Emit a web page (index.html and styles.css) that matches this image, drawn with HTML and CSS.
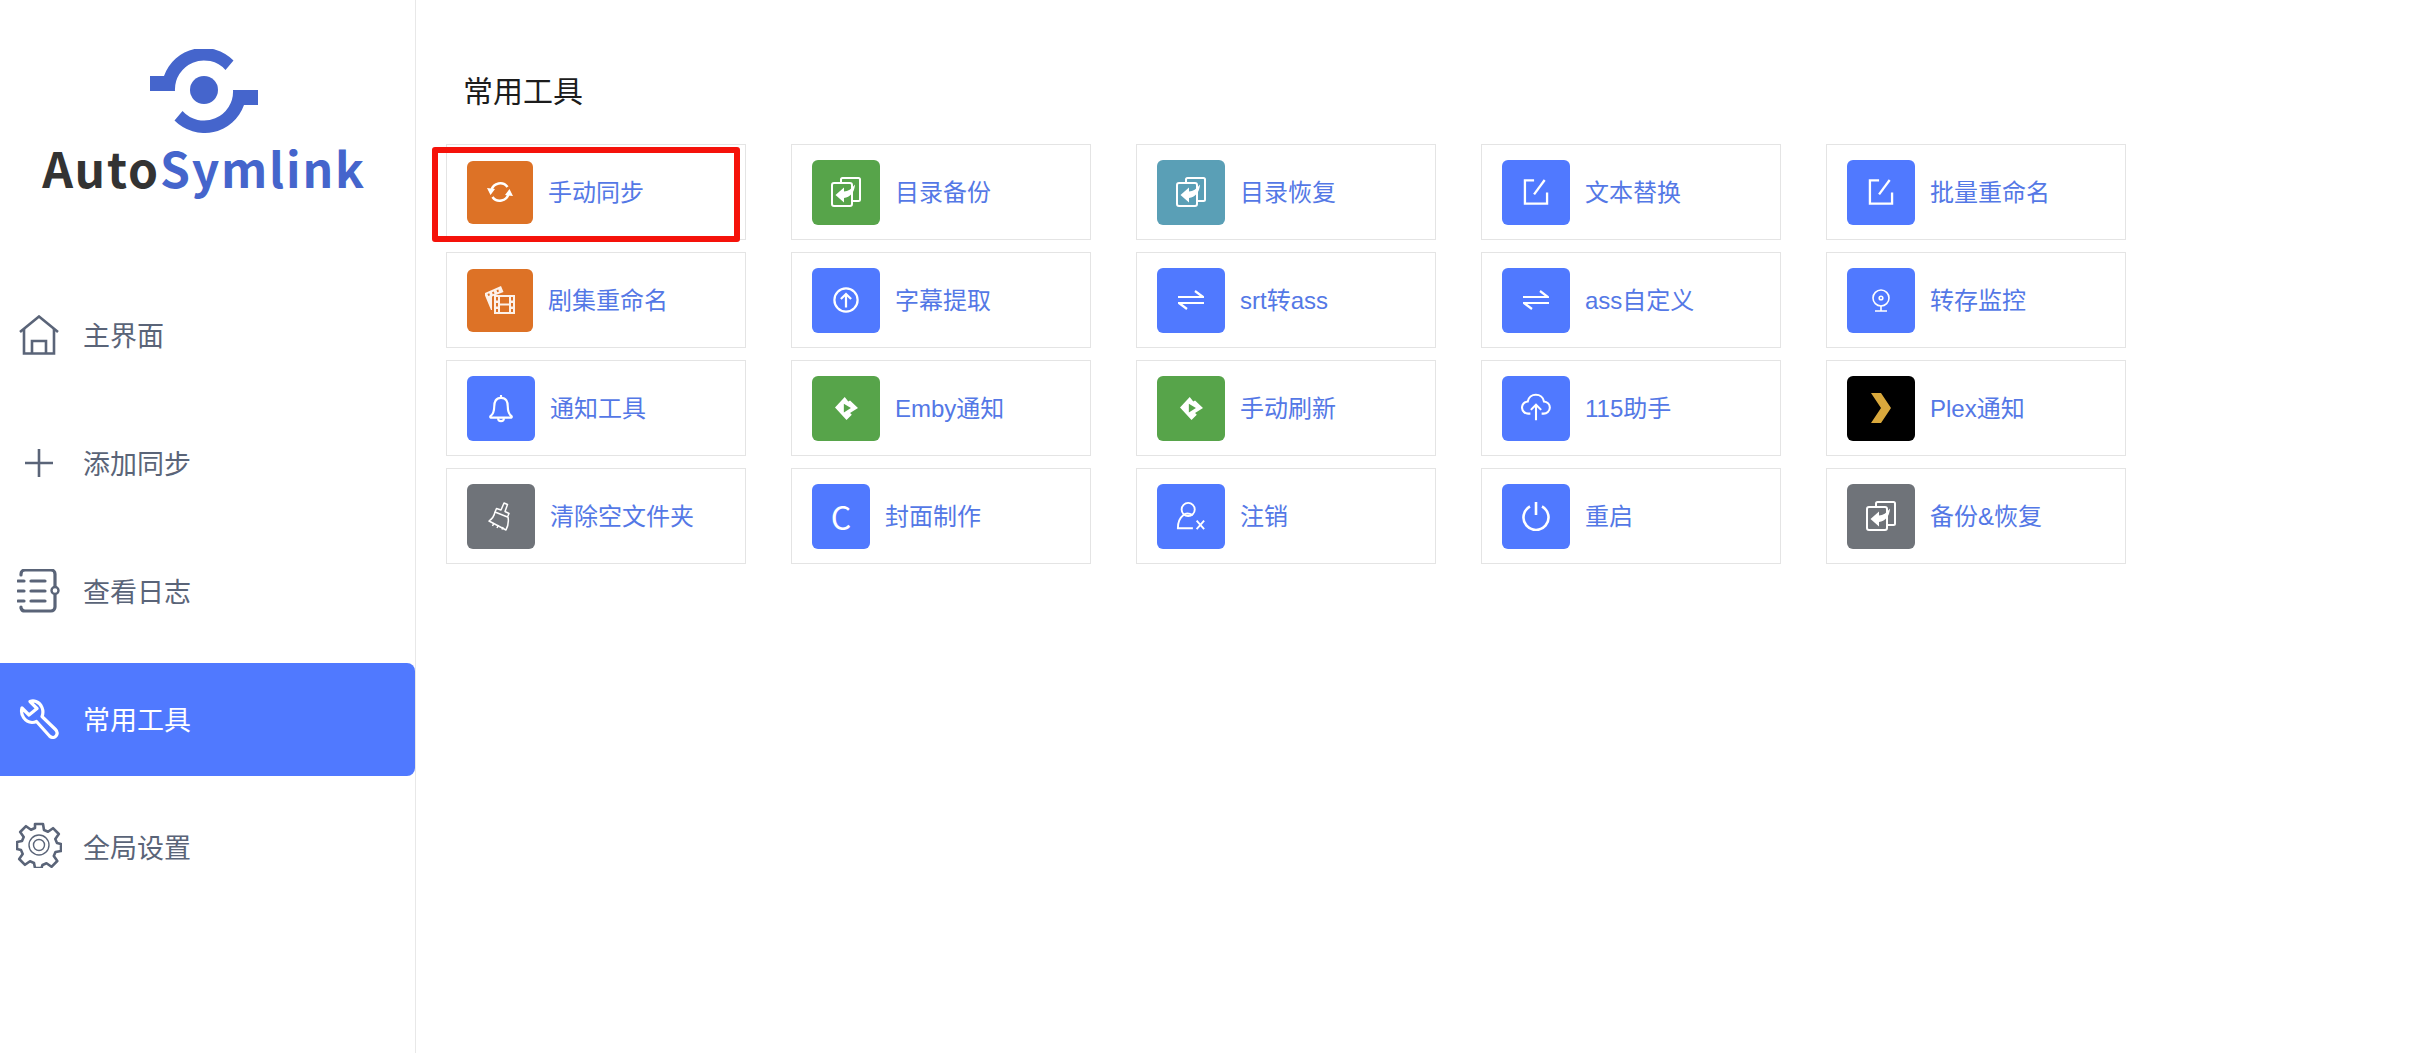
FILE: index.html
```html
<!DOCTYPE html>
<html lang="zh-CN">
<head>
<meta charset="utf-8">
<title>AutoSymlink</title>
<link rel="stylesheet" href="styles.css">
</head>
<body>
<svg class="sprite" xmlns="http://www.w3.org/2000/svg">
  <symbol id="i-sync" viewBox="0 0 26 26"><g fill="none" stroke="#fff" stroke-width="2.600"><path d="M4.500 11A9 9 0 0 1 20.500 8"/><path d="M21.500 15A9 9 0 0 1 5.500 18"/></g><path fill="#fff" d="M0 9 8 10 3.500 16zM26 17 18 16 22.500 10z"/></symbol>
  <symbol id="i-copy" viewBox="0 0 30 30"><g fill="none" stroke="#fff" stroke-width="2"><path d="M10 5V2.500A1.500 1.500 0 0 1 11.500 1h16A1.500 1.500 0 0 1 29 2.500v20a1.500 1.500 0 0 1-1.500 1.500H22"/><rect x="1" y="6" width="20" height="23" rx="2"/></g><path fill="#fff" d="M4.500 18 13 10.500V14.500C17 14.500 20.500 12 24 7.500 23.500 15.500 19 20.500 13 21V25.500Z"/></symbol>
  <symbol id="i-film" viewBox="0 0 30 28"><path fill="#fff" fill-opacity=".9" d="M0 7 16 0l2.500 6L7 10.500V24h-1L0 9.500zM2.500 8l.8 2 1.700-.7-.8-2zM7 6.200l.8 2 1.700-.7-.8-2zM11.500 4.300l.8 2 1.700-.7-.8-2z"/><path fill="#fff" fill-opacity=".9" fill-rule="evenodd" d="M9 9h21v19H9zM11 11v3.500h2V11zM11 17v3.500h2V17zM11 23v3h2v-3zM26 11v3.500h2V11zM26 17v3.500h2V17zM26 23v3h2v-3zM15 11v6.500h9V11zM15 19.500V26h9v-6.500z"/></symbol>
  <symbol id="i-up" viewBox="0 0 28 28"><g fill="none" stroke="#fff" stroke-width="2.400"><circle cx="14" cy="14" r="12.500"/><path d="M14 22V7.500M8.500 13 14 7.500l5.500 5.500"/></g></symbol>
  <symbol id="i-edit" viewBox="0 0 26 27"><g fill="none" stroke="#fff" stroke-width="2.400"><path d="M11 1.500H1.500v24h23V14"/><path d="M11 16 22 1"/></g></symbol>
  <symbol id="i-swap" viewBox="0 0 26 20"><g fill="none" stroke="#fff" stroke-width="2.200"><path d="M0 7h25L17 1"/><path d="M26 13H1l8 6"/></g></symbol>
  <symbol id="i-cam" viewBox="0 0 20 23"><g fill="none" stroke="#fff" stroke-width="1.600"><circle cx="10" cy="9" r="8"/><circle cx="10" cy="9" r="1.800"/><path d="M10 17v5M4 22h12"/></g></symbol>
  <symbol id="i-bell" viewBox="0 0 26 30"><g fill="none" stroke="#fff" stroke-width="2.200"><path d="M13 4C7.500 4 6 8 6 13c0 5-1 8-4 10a1 1 0 0 0 .5 1.500h21a1 1 0 0 0 .5-1.500c-3-2-4-5-4-10 0-5-1.500-9-7-9z"/><path d="M13 1v3M10 25a3 3 0 0 0 6 0"/></g></symbol>
  <symbol id="i-emby" viewBox="0 0 26 26"><path fill="#fff" fill-rule="evenodd" d="M11 0 0 12 13 26l6-6-2-2 9-5.500L17 4l-2 1zM10 7.500v10l8-5z"/></symbol>
  <symbol id="i-cloud" viewBox="0 0 32 26"><g fill="none" stroke="#fff" stroke-width="2.200"><path d="M10 19H8a6.500 6.500 0 0 1-.8-13A8.800 8.800 0 0 1 24.500 6 6.500 6.500 0 0 1 24 19h-2"/><path d="M16 26V10M10.500 15 16 9.500l5.500 5.500"/></g></symbol>
  <symbol id="i-plex" viewBox="0 0 20 30"><path fill="#d9a83c" d="M0 0h10l10 15-10 15H0l10-15z"/></symbol>
  <symbol id="i-broom" viewBox="0 0 26 29"><g fill="none" stroke="#fff" stroke-width="1.500" stroke-linejoin="round"><path d="M16 1l3.500 1.500-2.500 7 4 2-1.500 3.500L7 10l1.500-3.500 4.500 1.500z"/><path d="M7 10c-1 5-3 7-6 9l17 9c2-4 3-8 2-13"/><path d="M6 21l-1.500 3M10.500 23l-1.500 3M15 25l-1 2.500"/></g></symbol>
  <symbol id="i-user" viewBox="0 0 32 30"><g fill="none" stroke="#fff" stroke-width="2"><circle cx="13" cy="8" r="7"/><path d="M18 14c-4-2-8-2-10 0-4 3-6 8-6 14h16"/><path d="M22 20l8 9M30 20l-8 9"/></g></symbol>
  <symbol id="i-power" viewBox="0 0 30 28"><g fill="none" stroke="#fff" stroke-width="2.600"><path d="M9 4.500a12.500 12.500 0 1 0 12 0"/><path d="M15 0v13"/></g></symbol>
  <symbol id="n-home" viewBox="0 0 40 40"><g fill="none" stroke="#5a6478" stroke-width="2.600"><path d="M1 17 20 1.500 39 17"/><path d="M5 14v24.500h30V14"/><path d="M13 38.500V26h14v12.500"/></g></symbol>
  <symbol id="n-plus" viewBox="0 0 28 28"><path stroke="#5a6478" stroke-width="2.600" d="M14 0v28M0 14h28"/></symbol>
  <symbol id="n-log" viewBox="0 0 44 44"><g fill="none" stroke="#5a6478" stroke-width="3.200" stroke-linecap="round"><path d="M4 6V5a4 4 0 0 1 4-4h26a4 4 0 0 1 4 4v12M4 38v1a4 4 0 0 0 4 3h26a4 4 0 0 0 4-4V26"/><path d="M1 12h6M1 22h6M1 32h6"/><path d="M14 12h14M14 22h14M14 32h14"/><circle cx="38" cy="21.500" r="3.500" stroke-width="2.400"/></g></symbol>
  <symbol id="n-wrench" viewBox="0 0 40 40"><path fill="none" stroke="#fff" stroke-width="3.200" stroke-linejoin="round" d="M11 2.500 18 9.500 10 16 3 9c-2 7 3 14 10 14.500 2 0 3-.3 4.500-1L30.500 37c2 2 5 2 6.500 0s1.500-4.500-.5-6.500L23 17.500c2.500-6-.5-13-6-15-2-.7-4-.7-6 0z"/></symbol>
  <symbol id="n-gear" viewBox="0 0 46 46"><g fill="none" stroke="#5a6478"><path stroke-width="2.600" stroke-linejoin="round" d="M19 2h8l1 6 4 1.700 5-3.500 5.800 5.800-3.500 5L41 21l4 1v7l-5.500 1-1.700 4 3.500 5-5.800 5.800-5-3.500-4 1.700-1 3H19l-1-5-4-1.700-5 3.500-5.800-5.800 3.500-5L5 28l-4-1v-7l5-1 1.700-4-3.500-5L10 4.200l5 3.500L19 6z"/><circle cx="23" cy="23" r="10" stroke-width="1.400"/><circle cx="23" cy="23" r="5.500" stroke-width="1.400"/></g></symbol>
</svg>
<div class="app">
  <aside class="sidebar">
    <div class="brand">
      <svg class="brand-mark" viewBox="150 49 108 84" xmlns="http://www.w3.org/2000/svg"><g fill="#4565cc"><path d="M233.500 60.500A42 42 0 0 0 164 76H150V91H175A29 29 0 0 1 225.500 70Z"/><path d="M174.500 120.500A42 42 0 0 0 244 105H258V90H233A29 29 0 0 1 182.500 111Z"/><circle cx="204" cy="90" r="14"/></g></svg>
      <div class="brand-name">Auto<span class="brand-accent">Symlink</span></div>
    </div>
    <nav class="nav">
      <a class="nav-item"><span class="nav-icon"><svg class="ni-home"><use href="#n-home"/></svg></span><span class="nav-text">主界面</span></a>
      <a class="nav-item"><span class="nav-icon"><svg class="ni-plus"><use href="#n-plus"/></svg></span><span class="nav-text">添加同步</span></a>
      <a class="nav-item"><span class="nav-icon"><svg class="ni-log"><use href="#n-log"/></svg></span><span class="nav-text">查看日志</span></a>
      <a class="nav-item active"><span class="nav-icon"><svg class="ni-home"><use href="#n-wrench"/></svg></span><span class="nav-text">常用工具</span></a>
      <a class="nav-item"><span class="nav-icon"><svg class="ni-gear"><use href="#n-gear"/></svg></span><span class="nav-text">全局设置</span></a>
    </nav>
  </aside>
  <main class="main">
    <h1 class="title">常用工具</h1>
    <div class="grid">
      <a class="card"><span class="tile small orange"><svg class="s24"><use href="#i-sync"/></svg></span><span class="label">手动同步</span><span class="highlight"></span></a>
      <a class="card"><span class="tile green"><svg class="s30"><use href="#i-copy"/></svg></span><span class="label">目录备份</span></a>
      <a class="card"><span class="tile teal"><svg class="s30"><use href="#i-copy"/></svg></span><span class="label">目录恢复</span></a>
      <a class="card"><span class="tile blue"><svg class="s26"><use href="#i-edit"/></svg></span><span class="label">文本替换</span></a>
      <a class="card"><span class="tile blue"><svg class="s26"><use href="#i-edit"/></svg></span><span class="label">批量重命名</span></a>

      <a class="card"><span class="tile small orange"><svg class="s30"><use href="#i-film"/></svg></span><span class="label">剧集重命名</span></a>
      <a class="card"><span class="tile blue"><svg class="s26"><use href="#i-up"/></svg></span><span class="label">字幕提取</span></a>
      <a class="card"><span class="tile blue"><svg class="s26"><use href="#i-swap"/></svg></span><span class="label">srt转ass</span></a>
      <a class="card"><span class="tile blue"><svg class="s26"><use href="#i-swap"/></svg></span><span class="label">ass自定义</span></a>
      <a class="card"><span class="tile blue"><svg class="s22"><use href="#i-cam"/></svg></span><span class="label">转存监控</span></a>

      <a class="card"><span class="tile blue"><svg class="s28"><use href="#i-bell"/></svg></span><span class="label">通知工具</span></a>
      <a class="card"><span class="tile green"><svg class="s23"><use href="#i-emby"/></svg></span><span class="label">Emby通知</span></a>
      <a class="card"><span class="tile green"><svg class="s23"><use href="#i-emby"/></svg></span><span class="label">手动刷新</span></a>
      <a class="card"><span class="tile blue"><svg class="s30"><use href="#i-cloud"/></svg></span><span class="label">115助手</span></a>
      <a class="card"><span class="tile black"><svg class="s30"><use href="#i-plex"/></svg></span><span class="label">Plex通知</span></a>

      <a class="card"><span class="tile gray"><svg class="s28"><use href="#i-broom"/></svg></span><span class="label">清除空文件夹</span></a>
      <a class="card"><span class="tile narrow blue">C</span><span class="label">封面制作</span></a>
      <a class="card"><span class="tile blue"><svg class="s30"><use href="#i-user"/></svg></span><span class="label">注销</span></a>
      <a class="card"><span class="tile blue"><svg class="s30"><use href="#i-power"/></svg></span><span class="label">重启</span></a>
      <a class="card"><span class="tile gray"><svg class="s30"><use href="#i-copy"/></svg></span><span class="label">备份&amp;恢复</span></a>
    </div>
  </main>
</div>
</body>
</html>
```

FILE: styles.css
```css
* { box-sizing: border-box; }
html, body { margin: 0; height: 100%; background: #fff; }
body { font-family: "Liberation Sans", "Noto Sans CJK SC", sans-serif; overflow: hidden; }
.sprite { display: none; }
.app { display: flex; height: 1053px; }

.sidebar { width: 416px; flex: none; border-right: 1px solid #e8e8e8; }
.brand { height: 279px; padding: 49px 7px 0 0; display: flex; flex-direction: column; align-items: center; }
.brand-mark { width: 108px; height: 84px; display: block; }
.brand-name { margin-top: 4px; font: 700 48px/60px "Noto Sans CJK SC", sans-serif; color: #333; letter-spacing: 1.8px; white-space: nowrap; }
.brand-accent { color: #4565cc; }

.nav { display: flex; flex-direction: column; gap: 15px; }
.nav-item { height: 113px; display: flex; align-items: center; color: #5a6478; font-size: 27px; border-radius: 0 8px 8px 0; }
.nav-item.active { background: #5079ff; color: #fff; }
.nav-icon { width: 78px; margin: 0 5px 1px 0; display: flex; justify-content: center; flex: none; }
.nav-text { padding-bottom: 3px; }
.ni-home { width: 40px; height: 40px; }
.ni-plus { width: 28px; height: 28px; }
.ni-log { width: 44px; height: 44px; }
.ni-gear { width: 46px; height: 46px; margin-bottom: 4px; }

.main { flex: 1; padding: 0 0 0 30px; }
.title { margin: 0; height: 144px; padding: 72px 0 0 17px; font-size: 30px; line-height: 40px; font-weight: 400; color: #1c1c1c; }
.grid { display: grid; grid-template-columns: repeat(5, 300px); grid-auto-rows: 96px; column-gap: 45px; row-gap: 12px; }
.card { position: relative; display: flex; align-items: center; gap: 15px; padding-left: 20px; border: 1px solid #e4e4e4; }
.label { color: #5478e6; font-size: 24px; white-space: nowrap; padding-bottom: 4px; }
.tile { width: 68px; height: 65px; flex: none; border-radius: 6px; display: flex; align-items: center; justify-content: center; color: #fff; }
.tile.small { width: 66px; height: 63px; }
.tile.narrow { width: 58px; font: 32px "Noto Sans CJK SC", sans-serif; }
.orange { background: #dd7226; }
.green { background: #57a44a; }
.teal { background: #5a9fb6; }
.blue { background: #5079ff; }
.gray { background: #6f7379; }
.black { background: #000; }
.s22 { width: 22px; height: 23px; }
.s23 { width: 23px; height: 23px; }
.s24 { width: 26px; height: 26px; }
.s26 { width: 26px; height: 26px; }
.s28 { width: 28px; height: 29px; }
.s30 { width: 30px; height: 30px; }
.highlight { position: absolute; left: -15px; top: 2px; width: 308px; height: 95px; border: 6px solid #f5120a; border-radius: 3px; pointer-events: none; }
```
